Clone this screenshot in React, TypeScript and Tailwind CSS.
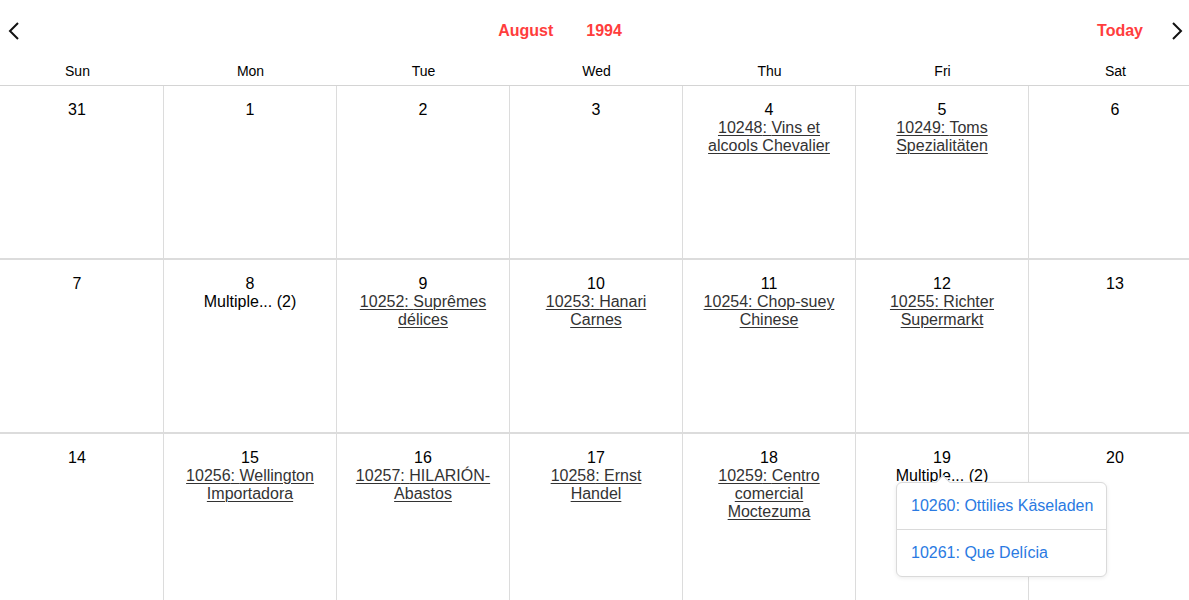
import React from "react";

type Ev = { id: number; name: string };
type Day = { n: number; events?: Ev[]; multi?: boolean; open?: boolean };

const days = ["Sun", "Mon", "Tue", "Wed", "Thu", "Fri", "Sat"];

const weeks: Day[][] = [
  [
    { n: 31 },
    { n: 1 },
    { n: 2 },
    { n: 3 },
    { n: 4, events: [{ id: 10248, name: "Vins et alcools Chevalier" }] },
    { n: 5, events: [{ id: 10249, name: "Toms Spezialitäten" }] },
    { n: 6 },
  ],
  [
    { n: 7 },
    {
      n: 8,
      multi: true,
      events: [
        { id: 10250, name: "Hanari Carnes" },
        { id: 10251, name: "Victuailles en stock" },
      ],
    },
    { n: 9, events: [{ id: 10252, name: "Suprêmes délices" }] },
    { n: 10, events: [{ id: 10253, name: "Hanari Carnes" }] },
    { n: 11, events: [{ id: 10254, name: "Chop-suey Chinese" }] },
    { n: 12, events: [{ id: 10255, name: "Richter Supermarkt" }] },
    { n: 13 },
  ],
  [
    { n: 14 },
    { n: 15, events: [{ id: 10256, name: "Wellington Importadora" }] },
    { n: 16, events: [{ id: 10257, name: "HILARIÓN-Abastos" }] },
    { n: 17, events: [{ id: 10258, name: "Ernst Handel" }] },
    { n: 18, events: [{ id: 10259, name: "Centro comercial Moctezuma" }] },
    {
      n: 19,
      multi: true,
      open: true,
      events: [
        { id: 10260, name: "Ottilies Käseladen" },
        { id: 10261, name: "Que Delícia" },
      ],
    },
    { n: 20 },
  ],
];

const Chevron = ({ dir }: { dir: "l" | "r" }) => (
  <svg width="12" height="18" viewBox="0 0 12 18" fill="none">
    <path
      d={dir === "l" ? "M10 1 L2 9 L10 17" : "M2 1 L10 9 L2 17"}
      stroke="#111"
      strokeWidth="2"
    />
  </svg>
);

const Cell = ({ day }: { day: Day }) => (
  <div className="relative h-[174px] border-r border-b-2 border-[#dcdcdc] pt-[15px] text-center text-[16px] leading-[18px] text-black">
    <div>{day.n}</div>
    {day.multi ? (
      <div>Multiple... ({day.events!.length})</div>
    ) : (
      day.events?.map((e) => (
        <div key={e.id} className="px-[16px]">
          <a href="#" className="text-[#333] underline decoration-1 underline-offset-2">
            {e.id}: {e.name}
          </a>
        </div>
      ))
    )}
    {day.open && (
      <div className="absolute left-[40px] top-[48px] z-10 w-[211px] whitespace-nowrap rounded-[6px] border border-[#dadada] bg-white text-left shadow-[0_1px_4px_rgba(0,0,0,0.08)]">
        <div className="absolute -top-[6px] left-[41px] h-[10px] w-[10px] rotate-45 border-l border-t border-[#dadada] bg-white" />
        {day.events!.map((e, i) => (
          <div
            key={e.id}
            className={
              "relative px-[14px] py-[14px] leading-[18px] text-[#2a7ae2] " +
              (i > 0 ? "border-t border-[#dadada]" : "")
            }
          >
            {e.id}: {e.name}
          </div>
        ))}
      </div>
    )}
  </div>
);

export default function App() {
  return (
    <div
      className="h-[600px] w-[1189px] overflow-hidden bg-white"
      style={{ fontFamily: '"Liberation Sans", Arial, sans-serif' }}
    >
      <div className="flex h-[60px] items-center pt-[2px]">
        <div className="flex w-[26px] justify-center pl-[2px]">
          <Chevron dir="l" />
        </div>
        <div className="flex flex-1 justify-center gap-[33px] pr-[3px] text-[16px] font-bold text-[#ff3d3d]">
          <span>August</span>
          <span>1994</span>
        </div>
        <span className="mr-[24px] text-[16px] font-bold text-[#ff3d3d]">Today</span>
        <div className="flex w-[22px] justify-center pr-[2px]">
          <Chevron dir="r" />
        </div>
      </div>
      <div className="-ml-[9px] w-[1211px]">
        <div className="grid grid-cols-7 border-b border-[#d4d4d4]">
          {days.map((d) => (
            <div key={d} className="h-[25px] pt-[1px] text-center text-[14px] leading-[20px] text-black">
              {d}
            </div>
          ))}
        </div>
        {weeks.map((w, i) => (
          <div key={i} className="grid grid-cols-7">
            {w.map((d) => (
              <Cell key={d.n} day={d} />
            ))}
          </div>
        ))}
      </div>
    </div>
  );
}
